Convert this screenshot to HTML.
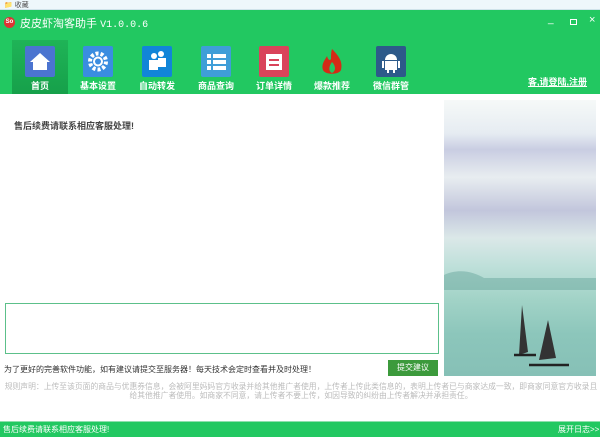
<!DOCTYPE html>
<html><head><meta charset="utf-8"><style>
*{margin:0;padding:0;box-sizing:border-box}
body{width:600px;height:437px;overflow:hidden;background:#fff;font-family:"Liberation Sans","Noto Sans CJK SC",sans-serif;position:relative}
.a{position:absolute}
.top{left:0;top:0;width:600px;height:10px;background:#eef7fb;border-bottom:1px solid #cfe3ea}
.hdr{left:0;top:10px;width:600px;height:84px;background:#22c861}
.sel{left:12px;top:30px;width:56px;height:54px;background:linear-gradient(#1fb457,#16a04a)}
.ic{width:30px;height:31px;top:36px;border-radius:2px}
.lb{top:69px;font-size:9px;font-weight:bold;color:#fff;width:60px;text-align:center}
.t{font-size:11px;color:#fff}
</style></head><body>
<div class="a top"></div>
<div class="a" style="left:4px;top:0;width:40px;height:8px;font-size:7px;color:#555">📁 收藏</div>
<div class="a hdr">
 <div class="a" style="left:4px;top:7px;width:11px;height:11px;border-radius:50%;background:#d33;color:#fff;font-size:6px;text-align:center;line-height:11px;font-weight:bold">So</div>
 <div class="a t" style="left:20px;top:5px;font-size:11px">皮皮虾淘客助手 <span style="font-family:'Liberation Mono',monospace;font-size:10px">V1.0.0.6</span></div>
 <div class="a t" style="left:548px;top:4px;font-size:10px">_</div>
 <div class="a" style="left:570px;top:9px;width:7px;height:6px;border:1.5px solid #fff"></div>
 <div class="a t" style="left:589px;top:4px;font-size:11px">×</div>
 <div class="a sel"></div>
 <div class="a ic" style="left:25px;background:#4b74d0"><svg width="30" height="31"><path d="M15 7 L25 16 H22 V24 H8 V16 H5 Z" fill="#fff"/></svg></div>
 <div class="a ic" style="left:83px;background:#3a8de0"><svg width="30" height="31"><circle cx="15" cy="15.5" r="8" fill="none" stroke="#fff" stroke-width="4" stroke-dasharray="3 2"/><circle cx="15" cy="15.5" r="4" fill="none" stroke="#fff" stroke-width="2"/></svg></div>
 <div class="a ic" style="left:142px;background:#1185d8"><svg width="30" height="31"><circle cx="12" cy="10" r="3" fill="#fff"/><circle cx="19" cy="8" r="3" fill="#fff"/><rect x="7" y="14" width="9" height="10" fill="#fff"/><rect x="16" y="12" width="8" height="9" fill="#fff"/></svg></div>
 <div class="a ic" style="left:201px;background:#3f9ed8"><svg width="30" height="31"><g fill="#fff"><rect x="6" y="8" width="4" height="4"/><rect x="12" y="8" width="13" height="4"/><rect x="6" y="14" width="4" height="4"/><rect x="12" y="14" width="13" height="4"/><rect x="6" y="20" width="4" height="4"/><rect x="12" y="20" width="13" height="4"/></g></svg></div>
 <div class="a ic" style="left:259px;background:#d9435a"><svg width="30" height="31"><rect x="7" y="8" width="16" height="16" fill="#fff"/><rect x="10" y="13" width="10" height="2" fill="#d9435a"/><rect x="10" y="18" width="10" height="2" fill="#d9435a"/></svg></div>
 <div class="a" style="left:317px;top:36px;width:30px;height:31px"><svg width="30" height="31"><path d="M15 3 C22 10 26 16 24 24 C22 29 8 29 6 24 C4 18 8 14 10 10 C11 14 13 15 14 13 C14 9 14 6 15 3Z" fill="#d42b16"/><path d="M15 16 C19 20 19 25 15 27 C11 25 12 20 15 16Z" fill="#22c861"/></svg></div>
 <div class="a ic" style="left:376px;background:#2d5a8a"><svg width="30" height="31"><path d="M9 14 A6 6 0 0 1 21 14 Z" fill="#fff"/><rect x="9" y="15" width="12" height="9" fill="#fff"/><rect x="6" y="15" width="2" height="7" fill="#fff"/><rect x="22" y="15" width="2" height="7" fill="#fff"/><rect x="11" y="23" width="2" height="4" fill="#fff"/><rect x="17" y="23" width="2" height="4" fill="#fff"/></svg></div>
 <div class="a lb" style="left:10px">首页</div>
 <div class="a lb" style="left:68px">基本设置</div>
 <div class="a lb" style="left:127px">自动转发</div>
 <div class="a lb" style="left:186px">商品查询</div>
 <div class="a lb" style="left:244px">订单详情</div>
 <div class="a lb" style="left:302px">爆款推荐</div>
 <div class="a lb" style="left:361px">微信群管</div>
 <div class="a" style="left:528px;top:65px;font-size:9px;color:#fff;text-decoration:underline;font-weight:bold">客,请登陆,注册</div>
</div>
<div class="a" style="left:14px;top:119px;font-size:9px;font-weight:bold;color:#444">售后续费请联系相应客服处理!</div>
<div class="a" style="left:444px;top:100px;width:152px;height:276px;background:linear-gradient(#f6f9f8 0%,#e6ecf2 12%,#c9cde2 18%,#e8edf0 28%,#c2c6dc 40%,#dbe8e8 50%,#bfe0da 60%,#a2d3c7 72%,#8cc6bb 85%,#86c0b6 100%)">
 <svg width="152" height="276" style="position:absolute;left:0;top:0"><path d="M0 175 C15 168 30 172 40 178 L152 178 V190 H0Z" fill="#6aa89d" opacity=".5"/><path d="M75 255 L78 205 L84 252Z M95 260 L104 220 L112 258Z" fill="#333"/><path d="M70 255 H92 M85 265 H125" stroke="#222" stroke-width="2.5"/></svg>
</div>
<div class="a" style="left:5px;top:303px;width:434px;height:51px;border:1px solid #5cc08a"></div>
<div class="a" style="left:4px;top:364px;font-size:8px;color:#333">为了更好的完善软件功能，如有建议请提交至服务器！每天技术会定时查看并及时处理！</div>
<div class="a" style="left:388px;top:360px;width:50px;height:16px;background:#3c9a3c;color:#fff;font-size:8px;text-align:center;line-height:16px">提交建议</div>
<div class="a" style="left:4px;top:382px;width:594px;font-size:7.8px;color:#bbb;text-align:center;line-height:9px">规则声明：上传至该页面的商品与优惠券信息，会被阿里妈妈官方收录并给其他推广者使用，上传者上传此类信息的，表明上传者已与商家达成一致，即商家同意官方收录且给其他推广者使用。如商家不同意，请上传者不要上传，如因导致的纠纷由上传者解决并承担责任。</div>
<div class="a" style="left:0;top:421px;width:600px;height:16px;background:#22c861;border-top:1px solid #8fe0ad"></div>
<div class="a" style="left:3px;top:424px;font-size:8px;color:#fff">售后续费请联系相应客服处理!</div>
<div class="a" style="left:558px;top:424px;font-size:8px;color:#fff">展开日志&gt;&gt;</div>
</body></html>
